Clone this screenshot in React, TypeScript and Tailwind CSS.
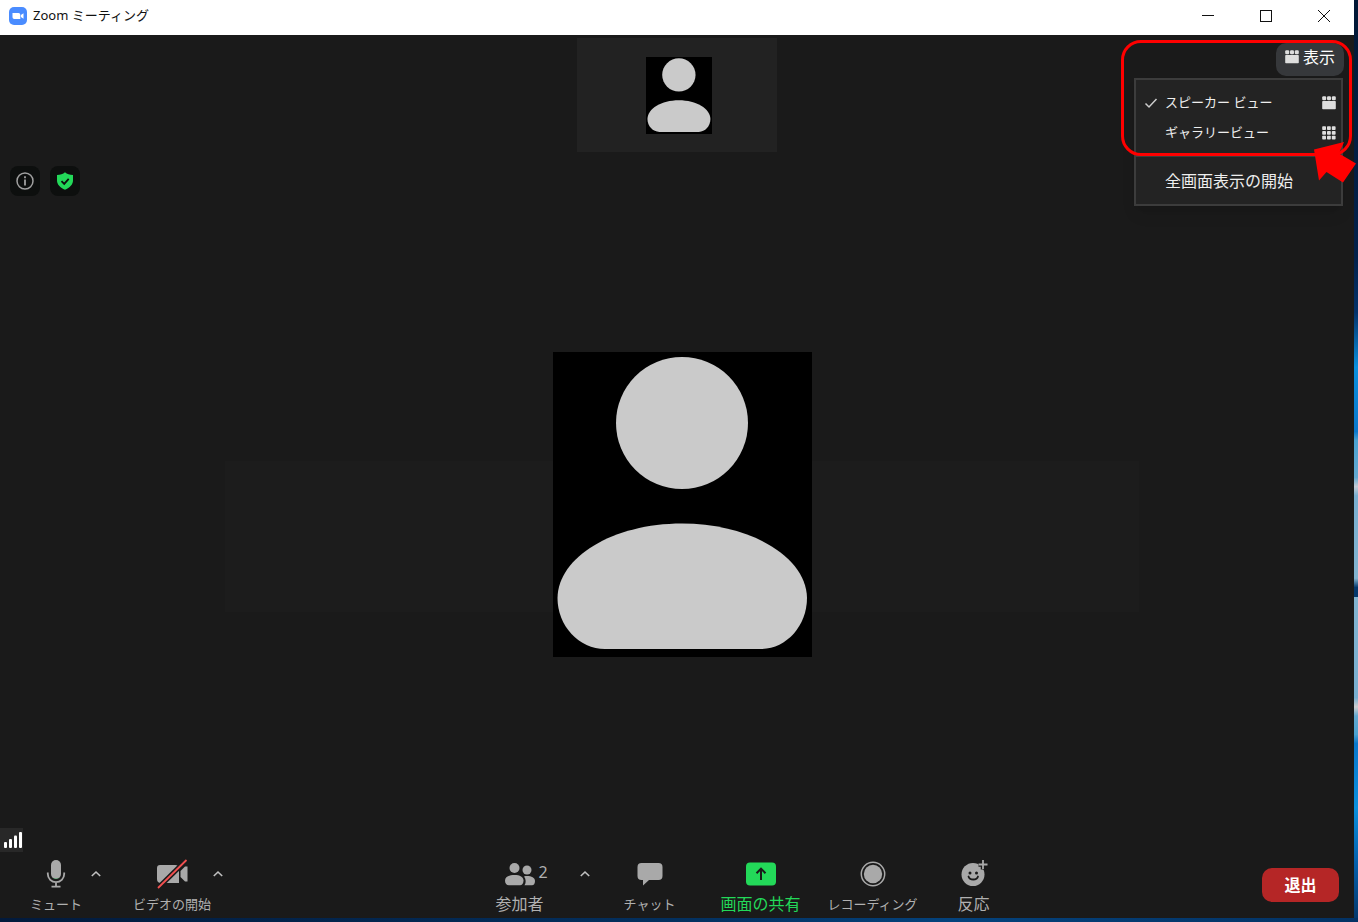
import { useState } from "react";
import type { ReactNode } from "react";
import { clsx } from "clsx";

interface IconProps {
  className?: string;
}

const ZoomLogo = () => (
  <svg viewBox="0 0 18 18" className="h-[18px] w-[18px]" aria-hidden="true">
    <rect width="18" height="18" rx="5" fill="#4a8cff" />
    <path d="M3.5 6h6a1.8 1.8 0 0 1 1.8 1.8V12H5.2a1.8 1.8 0 0 1-1.7-1.8z" fill="#fff" />
    <path d="M11.9 8l2.6-1.8v5.6L11.9 10z" fill="#fff" />
  </svg>
);

const SpeakerViewIcon = ({ className }: IconProps) => (
  <svg viewBox="0 0 14 14" className={clsx("h-3.5 w-3.5", className)} fill="currentColor" aria-hidden="true">
    <rect x="0.2" y="0.2" width="4" height="4" rx="1.2" />
    <rect x="5" y="0.2" width="4" height="4" rx="1.2" />
    <rect x="9.8" y="0.2" width="4" height="4" rx="1.2" />
    <rect x="0.2" y="5" width="13.6" height="8.2" rx="0.8" />
  </svg>
);

const GalleryViewIcon = () => (
  <svg viewBox="0 0 14 14" className="h-3.5 w-3.5" fill="currentColor" aria-hidden="true">
    {[0.2, 5, 9.8].map((y) =>
      [0.2, 5, 9.8].map((x) => <rect key={`${x}-${y}`} x={x} y={y} width="3.8" height="3.8" rx="0.8" />)
    )}
  </svg>
);

const CheckIcon = () => (
  <svg viewBox="0 0 14 12" className="h-3 w-3.5" fill="none" stroke="#ccc" strokeWidth="1.5" aria-hidden="true">
    <path d="M1.5 6.5l3.5 3.5 7.5-8" />
  </svg>
);

const CaretIcon = () => (
  <svg viewBox="0 0 12 8" className="h-2 w-3" fill="none" stroke="currentColor" strokeWidth="1.6" aria-hidden="true">
    <path d="M1.8 6l4.2-4 4.2 4" />
  </svg>
);

const MicIcon = () => (
  <svg viewBox="0 0 20 28" className="h-7 w-5" fill="none" aria-hidden="true">
    <rect x="5" y="0" width="10" height="19" rx="5" fill="#a9a9a9" />
    <path d="M7 17.5c2 1.6 4 1.6 6 0-1.5 2-4.5 2-6 0z" fill="#23b84f" />
    <path d="M1.8 12.5V14a8.2 8.2 0 0 0 16.4 0v-1.5M10 22v4.2M5.5 26.6h9" stroke="#a9a9a9" strokeWidth="1.8" />
  </svg>
);

const VideoOffIcon = () => (
  <svg viewBox="0 0 32 30" className="h-[30px] w-8" aria-hidden="true">
    <path d="M4 6h15a4 4 0 0 1 4 4v14H5a4 4 0 0 1-4-4V9a3 3 0 0 1 3-3z" fill="#a9a9a9" />
    <path d="M24.5 12L29 7.5h2.5v15H29L24.5 18z" fill="#a9a9a9" />
    <path d="M2 29L30.5 1" stroke="#1a1a1a" strokeWidth="5" />
    <path d="M2 29L30.5 1" stroke="#f25050" strokeWidth="1.8" />
  </svg>
);

const ParticipantsIcon = () => (
  <svg viewBox="0 0 30 24" className="h-6 w-[30px]" fill="#a9a9a9" aria-hidden="true">
    <circle cx="9.5" cy="6" r="5" />
    <circle cx="22" cy="8" r="4.5" />
    <path d="M0 18.5C0 15 4 13 9.500 13S18.500 15 18.500 18.500c0 3-1.500 4.800-3.500 4.800H4c-2.500 0-4-1.800-4-4.800z" />
    <path d="M19 14.500c1-.5 2-.5 3-.5 4.500 0 8 1.800 8 5 0 2.800-1.200 4.300-3 4.300h-7.500c1.800-2.500 1.500-6.300-.5-8.800z" />
  </svg>
);

const ChatIcon = () => (
  <svg viewBox="0 0 26 24" className="h-6 w-[26px]" fill="#a9a9a9" aria-hidden="true">
    <path d="M4.500 1h17a4 4 0 0 1 4 4v9a4 4 0 0 1-4 4H12l-6 5.500V18H4.500a4 4 0 0 1-4-4V5a4 4 0 0 1 4-4z" />
  </svg>
);

const ShareIcon = () => (
  <svg viewBox="0 0 30 24" className="h-6 w-[30px]" aria-hidden="true">
    <rect y="0.5" width="30" height="23" rx="4" fill="#23d959" />
    <path d="M15 18V7M10.500 11.200L15 6.700l4.500 4.500" fill="none" stroke="#1a1a1a" strokeWidth="2" />
  </svg>
);

const RecordIcon = () => (
  <svg viewBox="0 0 26 26" className="h-[26px] w-[26px]" aria-hidden="true">
    <circle cx="13" cy="13" r="11.7" fill="none" stroke="#a9a9a9" strokeWidth="1.5" />
    <circle cx="13" cy="13" r="9.2" fill="#a9a9a9" />
  </svg>
);

const ReactionIcon = () => (
  <svg viewBox="0 0 28 28" className="h-7 w-7" aria-hidden="true">
    <circle cx="13" cy="14.5" r="11.5" fill="#a9a9a9" />
    <path d="M23 0v9.500M18.500 4.500h9" stroke="#1a1a1a" strokeWidth="4.5" />
    <path d="M23 0v9M18.500 4.500h9" stroke="#a9a9a9" strokeWidth="1.8" />
    <circle cx="10" cy="13" r="1.5" fill="#1a1a1a" />
    <circle cx="16.5" cy="13" r="1.5" fill="#1a1a1a" />
    <path d="M8.500 16.500c1 4 8.500 4 9.500 0" fill="none" stroke="#1a1a1a" strokeWidth="1.8" strokeLinecap="round" />
  </svg>
);

const Avatar = ({ className }: IconProps) => (
  <svg viewBox="0 0 259 305" className={clsx("bg-black", className)} fill="#cacaca" role="img" aria-label="参加者のアイコン">
    <circle cx="129" cy="71" r="66" />
    <path d="M4.500 246C5 205 60 171.500 129 171.500S253.500 205 254 246c0 28-21 51-46 51H52C26 297 4.500 274 4.500 246z" />
  </svg>
);

interface ToolButtonProps {
  icon: ReactNode;
  label: string;
  width: string;
  kana?: boolean;
  active?: boolean;
  count?: number;
}

const ToolButton = ({ icon, label, width, kana, active, count }: ToolButtonProps) => (
  <button className={clsx("flex flex-col items-center gap-1", width, active ? "text-[#23d959]" : "text-[#b0b0b0]")}>
    <span className="relative flex h-7 items-center">
      {icon}
      {count !== undefined && <span className="absolute top-0 left-full ml-1 text-base leading-6">{count}</span>}
    </span>
    <span className={clsx("leading-6 whitespace-nowrap", kana ? "text-[13px]" : "text-base")}>{label}</span>
  </button>
);

const CaretButton = ({ label, width }: { label: string; width: string }) => (
  <button aria-label={label} className={clsx("flex h-7 items-center justify-center text-[#c0c0c0]", width)}>
    <CaretIcon />
  </button>
);

const TitleBar = () => (
  <header className="flex h-[35px] items-start justify-between bg-white pr-px text-[#111]">
    <div className="flex h-8 items-center gap-1.5 pl-[9px]">
      <ZoomLogo />
      <h1 className="text-[13px]">Zoom ミーティング</h1>
    </div>
    <div className="flex h-8">
      <button aria-label="最小化" className="flex w-[58px] items-center justify-center">
        <svg viewBox="0 0 12 12" className="h-3 w-3" stroke="currentColor"><path d="M0 5.500h12" /></svg>
      </button>
      <button aria-label="最大化" className="flex w-[58px] items-center justify-center">
        <svg viewBox="0 0 12 12" className="h-3 w-3" stroke="currentColor" fill="none"><rect x="0.5" y="0.5" width="11" height="11" /></svg>
      </button>
      <button aria-label="閉じる" className="flex w-[58px] items-center justify-center">
        <svg viewBox="0 0 12 12" className="h-3 w-3" stroke="currentColor"><path d="M0 0l12 12M12 0L0 12" /></svg>
      </button>
    </div>
  </header>
);

const views = [
  { id: "speaker", label: "スピーカー ビュー", icon: <SpeakerViewIcon /> },
  { id: "gallery", label: "ギャラリービュー", icon: <GalleryViewIcon /> },
];

const ViewMenu = () => {
  const [view, setView] = useState("speaker");

  return (
    <div className="relative z-10 mt-2 mr-2.5 justify-self-end">
      <button
        aria-haspopup="menu"
        aria-expanded="true"
        className="flex h-[33px] items-center gap-1 rounded-[10px] bg-[#36383b] px-[9px] pb-1.5 text-base text-white"
      >
        <SpeakerViewIcon className="text-[#dedede]" />
        表示
      </button>

      <div role="menu" className="absolute top-[35px] right-px w-[209px] border-2 border-[#3c3c3c] bg-[#232323] text-[#eee] shadow-lg">
        <div className="pt-2 pb-[7px]">
          {views.map(({ id, label, icon }) => (
            <button
              key={id}
              role="menuitemradio"
              aria-checked={view === id}
              onClick={() => setView(id)}
              className="flex h-[30px] w-full items-center pr-[5px] pl-2 text-[13px]"
            >
              <span className="w-[21px]">{view === id && <CheckIcon />}</span>
              <span className="flex-1 text-left whitespace-nowrap">{label}</span>
              <span className="text-[#dedede]">{icon}</span>
            </button>
          ))}
        </div>
        <button role="menuitem" className="flex h-[49px] w-full items-center border-t-2 border-[#3c3c3c] pl-[29px] text-base">
          全画面表示の開始
        </button>
      </div>

      {/* highlight frame and pointer */}
      <div className="pointer-events-none absolute -top-[3px] -right-2 h-[116px] w-[231px] rounded-[20px] border-3 border-[#ff0000]" />
      <svg viewBox="0 0 42 42" className="pointer-events-none absolute top-[98px] -right-3 h-[42px] w-[42px]" fill="#ff0000" aria-hidden="true">
        <path d="M0 8.500L30 1l-5 11.500L42 22.500 29 41.500 12.500 31 5 39.500z" />
      </svg>
    </div>
  );
};

const Stage = () => (
  <main className="flex flex-1 flex-col">
    <div className="grid grid-cols-[1fr_auto_1fr] items-start">
      <div />
      <div className="mt-[3px] flex h-[114px] w-[200px] items-center justify-center bg-[#222] pl-1">
        <Avatar className="h-[77px] w-[66px]" />
      </div>
      <ViewMenu />
    </div>

    <div className="mt-3.5 flex gap-2.5 pl-2.5">
      <button aria-label="ミーティング情報" className="flex h-[30px] w-[30px] items-center justify-center rounded-lg bg-[#0d0f0e]">
        <svg viewBox="0 0 18 18" className="h-[18px] w-[18px]" fill="none" stroke="#a0a0a0" strokeWidth="1.5">
          <circle cx="9" cy="9" r="8" />
          <path d="M9 4.200v2M9 7.500v6" strokeWidth="1.8" />
        </svg>
      </button>
      <button aria-label="暗号化" className="flex h-[30px] w-[30px] items-center justify-center rounded-lg bg-[#0d0f0e]">
        <svg viewBox="0 0 18 18" className="h-[18px] w-[18px]">
          <path d="M9 .3c2 1.700 4.700 2.600 8 2.700v5.500c0 4-3.200 7.200-8 9.200-4.800-2-8-5.200-8-9.200V3C4.300 2.900 7 2 9 .3z" fill="#23d959" />
          <path d="M5.500 9.200l2.700 2.700 4.500-5" fill="none" stroke="#0d0f0e" strokeWidth="1.8" />
        </svg>
      </button>
    </div>

    <div className="grid flex-1 place-items-center pb-4 pl-2.5">
      <div className="col-start-1 row-start-1 mt-16 h-[151px] w-[68%] bg-[#1c1c1c]" />
      <Avatar className="z-0 col-start-1 row-start-1 h-[305px] w-[259px]" />
    </div>

    <div className="flex h-6 w-[23px] items-center justify-center bg-[#282828] pl-0.5" role="img" aria-label="接続状態">
      <svg viewBox="0 0 18 16" className="h-4 w-[18px]" fill="#fff">
        <rect x="0" y="10" width="3" height="6" rx="1" />
        <rect x="5" y="7" width="3" height="9" rx="1" />
        <rect x="10" y="3.5" width="3" height="12.5" rx="1" />
        <rect x="15" y="0" width="3" height="16" rx="1" />
      </svg>
    </div>
  </main>
);

const Toolbar = () => (
  <footer className="flex h-[66px] items-start justify-between pt-2 pr-[15px] pl-[23px]">
    <div className="flex items-start">
      <ToolButton icon={<MicIcon />} label="ミュート" width="w-[66px]" kana />
      <CaretButton label="オーディオの設定" width="w-3.5" />
      <div className="ml-[30px] flex items-start">
        <ToolButton icon={<VideoOffIcon />} label="ビデオの開始" width="w-[78px]" kana />
        <CaretButton label="ビデオの設定" width="w-3.5" />
      </div>
    </div>
    <div className="flex items-start pl-2">
      <ToolButton icon={<ParticipantsIcon />} label="参加者" width="w-[98px]" count={2} />
      <CaretButton label="参加者の設定" width="w-8" />
      <ToolButton icon={<ChatIcon />} label="チャット" width="w-[98px]" kana />
      <ToolButton icon={<ShareIcon />} label="画面の共有" width="w-[124px]" active />
      <ToolButton icon={<RecordIcon />} label="レコーディング" width="w-[100px]" kana />
      <ToolButton icon={<ReactionIcon />} label="反応" width="w-[102px]" />
    </div>
    <button className="mt-2 h-[34px] w-[77px] rounded-[10px] bg-[#b52626] text-base font-bold text-white">退出</button>
  </footer>
);

export default function App() {
  return (
    <div className="flex h-screen flex-col font-['Noto_Sans','Noto_Sans_CJK_JP',sans-serif]">
      <div className="flex min-h-0 flex-1">
        <div className="z-10 flex min-w-0 flex-1 flex-col bg-[#1a1a1a]">
          <TitleBar />
          <Stage />
          <Toolbar />
        </div>
        {/* desktop wallpaper showing past the window edge */}
        <div className="w-1 bg-[linear-gradient(#021836_0%,#03214a_28%,#04326a_34%,#0a90dd_40%,#0a78cc_47%,#4ba3d2_48%,#63a9d0_52%,#c5ccd6_53%,#79afd0_54%,#82b4d0_63%,#04386c_64%,#04386c_65%,#82b4d0_65%,#79afd0_76%,#d0cfd0_77%,#63a9d0_78%,#4ba3d2_80%,#0a78cc_81%,#0a90dd_88%,#0460ac_94%,#04386c_100%)]" />
      </div>
      <div className="h-1 bg-[linear-gradient(90deg,#021a3c,#03305f_50%,#04427c_70%,#033264)]" />
    </div>
  );
}
